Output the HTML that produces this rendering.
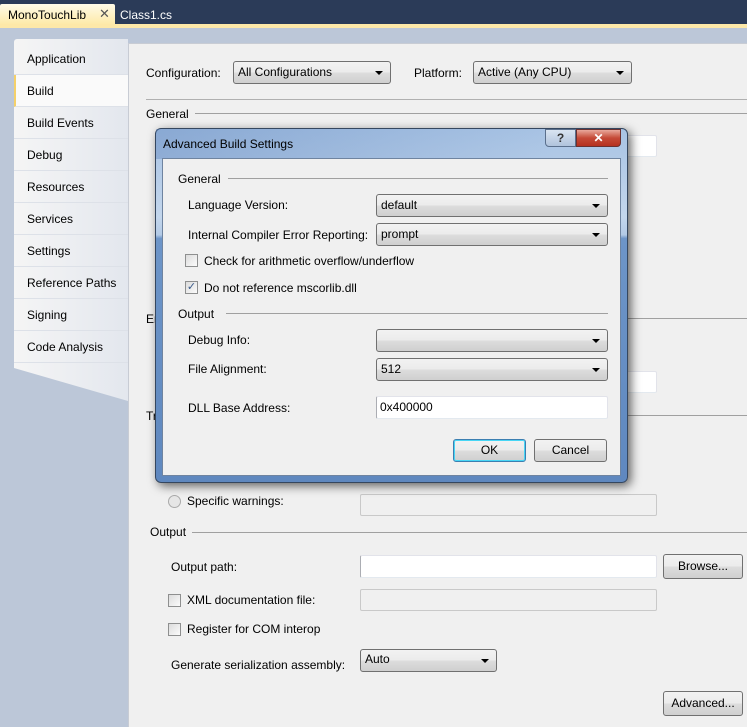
<!DOCTYPE html>
<html><head><style>
*{margin:0;padding:0;box-sizing:border-box}
body{width:747px;height:727px;overflow:hidden;background:#2b3b58;font-family:"Liberation Sans",sans-serif;font-size:12px;color:#000;position:relative}
.a{position:absolute}
.t{position:absolute;white-space:nowrap;line-height:14px}
.combo{position:absolute;border:1px solid #707070;border-radius:3px;background:linear-gradient(#f2f2f2 0%,#ebebeb 50%,#dddddd 51%,#cfcfcf 100%);padding:3px 4px;line-height:14px}
.combo:after{content:"";position:absolute;right:7px;top:50%;margin-top:-2px;border-left:4px solid transparent;border-right:4px solid transparent;border-top:4px solid #000}
.tb{position:absolute;background:#fff;border:1px solid #abadb3;border-radius:2px;border-color:#e2e3ea #e2e3ea #e3e9ef #abadb3}
.tb.dis{background:#f0f0f0;border:1px solid #c9c9c9}
.btn{position:absolute;border:1px solid #707070;border-radius:3px;background:linear-gradient(#f2f2f2 0%,#ebebeb 50%,#dddddd 51%,#cfcfcf 100%);text-align:center;line-height:20px}
.cb{position:absolute;width:13px;height:13px;border:1px solid #8e8f8f;background:linear-gradient(135deg,#dcdcdc,#fbfbfb)}
.line{position:absolute;height:1px;background:#a0a0a0}
.tab{position:absolute;left:14px;width:114px;height:32px;border-bottom:1px solid #dde1e8}
.tab span{position:absolute;left:13px;top:9px}
</style></head><body>
<div class="a" style="left:0;top:4px;width:115px;height:21px;background:linear-gradient(#fffbe8,#fde9a6);border-radius:2px 2px 0 0"></div>
<div class="t" style="left:8px;top:8px">MonoTouchLib</div>
<div class="t" style="left:99px;top:7px;color:#555;font-size:13px">✕</div>
<div class="t" style="left:120px;top:8px;color:#fff">Class1.cs</div>
<div class="a" style="left:0;top:24px;width:747px;height:4px;background:#fde8a8"></div>
<div class="a" style="left:0;top:28px;width:747px;height:699px;background:#bcc7d8"></div>
<div class="a" style="left:14px;top:39px;width:114px;height:362px;background:linear-gradient(90deg,#f5f5f5,#e3e7ee);clip-path:polygon(0 0,100% 0,100% 100%,0 329px);border-radius:3px 0 0 0"></div>
<div class="tab" style="top:43px"><span>Application</span></div>
<div class="tab" style="top:75px;background:#fafafa;border-left:2px solid #f4d06a"><span style="left:11px">Build</span></div>
<div class="tab" style="top:107px"><span>Build Events</span></div>
<div class="tab" style="top:139px"><span>Debug</span></div>
<div class="tab" style="top:171px"><span>Resources</span></div>
<div class="tab" style="top:203px"><span>Services</span></div>
<div class="tab" style="top:235px"><span>Settings</span></div>
<div class="tab" style="top:267px"><span>Reference Paths</span></div>
<div class="tab" style="top:299px"><span>Signing</span></div>
<div class="tab" style="top:331px"><span>Code Analysis</span></div>
<div class="a" style="left:128px;top:43px;width:619px;height:684px;background:#f0f0f0;border-left:1px solid #c8ccd4;border-top:1px solid #c8ccd4"></div>
<div class="t" style="left:146px;top:66px">Configuration:</div>
<div class="combo" style="left:233px;top:61px;width:158px;height:23px">All Configurations</div>
<div class="t" style="left:414px;top:66px">Platform:</div>
<div class="combo" style="left:473px;top:61px;width:159px;height:23px">Active (Any CPU)</div>
<div class="line" style="left:146px;top:99px;width:601px;background:#b0b0b0"></div>
<div class="t" style="left:146px;top:107px">General</div>
<div class="line" style="left:195px;top:113px;width:552px"></div>
<div class="tb" style="left:600px;top:135px;width:57px;height:22px"></div>
<div class="t" style="left:146px;top:312px">Er</div>
<div class="line" style="left:600px;top:318px;width:147px"></div>
<div class="tb" style="left:600px;top:371px;width:57px;height:22px"></div>
<div class="t" style="left:146px;top:409px">Tr</div>
<div class="line" style="left:600px;top:415px;width:147px"></div>
<div class="a" style="left:168px;top:495px;width:13px;height:13px;border-radius:50%;border:1px solid #aaa;background:#e6e6e6"></div>
<div class="t" style="left:187px;top:494px">Specific warnings:</div>
<div class="tb dis" style="left:360px;top:494px;width:297px;height:22px"></div>
<div class="t" style="left:150px;top:525px">Output</div>
<div class="line" style="left:192px;top:532px;width:555px"></div>
<div class="t" style="left:171px;top:560px">Output path:</div>
<div class="tb" style="left:360px;top:555px;width:297px;height:23px"></div>
<div class="btn" style="left:663px;top:554px;width:80px;height:25px;line-height:23px">Browse...</div>
<div class="cb" style="left:168px;top:594px"></div>
<div class="t" style="left:187px;top:593px">XML documentation file:</div>
<div class="tb dis" style="left:360px;top:589px;width:297px;height:22px"></div>
<div class="cb" style="left:168px;top:623px"></div>
<div class="t" style="left:187px;top:622px">Register for COM interop</div>
<div class="t" style="left:171px;top:658px">Generate serialization assembly:</div>
<div class="combo" style="left:360px;top:649px;width:137px;height:23px;padding-top:2px">Auto</div>
<div class="btn" style="left:663px;top:691px;width:80px;height:25px;line-height:23px">Advanced...</div>
<div class="a" style="left:155px;top:128px;width:473px;height:355px;border-radius:6px;border:1px solid #35475f;background:linear-gradient(#a8c3e4 0%,#c3d6ec 25%,#b3cae6 30%,#6d95c8 31%,#5f88bf 100%);box-shadow:3px 3px 10px rgba(0,0,0,.6)"></div>
<div class="a" style="left:156px;top:129px;width:400px;height:30px;background:linear-gradient(90deg,rgba(80,120,180,.35),rgba(255,255,255,0))"></div>
<div class="t" style="left:163px;top:137px">Advanced Build Settings</div>
<div class="a" style="left:545px;top:129px;width:31px;height:18px;border:1px solid #5a6f8c;border-radius:0 0 0 4px;background:linear-gradient(#d9e4f1,#b0c3dc);text-align:center;font-weight:bold;color:#333;line-height:16px">?</div>
<div class="a" style="left:576px;top:129px;width:45px;height:18px;border:1px solid #6a3030;border-radius:0 0 4px 0;background:linear-gradient(#e9a99c,#c54a37 50%,#b53020);text-align:center;color:#fff;font-weight:bold;line-height:16px">✕</div>
<div class="a" style="left:162px;top:158px;width:459px;height:318px;background:#f0f0f0;border:1px solid #6f84a0"></div>
<div class="t" style="left:178px;top:172px">General</div>
<div class="line" style="left:228px;top:178px;width:380px"></div>
<div class="t" style="left:188px;top:198px">Language Version:</div>
<div class="combo" style="left:376px;top:194px;width:232px;height:23px">default</div>
<div class="t" style="left:188px;top:228px">Internal Compiler Error Reporting:</div>
<div class="combo" style="left:376px;top:223px;width:232px;height:23px">prompt</div>
<div class="cb" style="left:185px;top:254px"></div>
<div class="t" style="left:204px;top:254px">Check for arithmetic overflow/underflow</div>
<div class="cb" style="left:185px;top:281px;font-size:11px;line-height:11px;text-align:center;color:#3a5a8a">✓</div>
<div class="t" style="left:204px;top:281px">Do not reference mscorlib.dll</div>
<div class="t" style="left:178px;top:307px">Output</div>
<div class="line" style="left:226px;top:313px;width:382px"></div>
<div class="t" style="left:188px;top:333px">Debug Info:</div>
<div class="combo" style="left:376px;top:329px;width:232px;height:23px"></div>
<div class="t" style="left:188px;top:362px">File Alignment:</div>
<div class="combo" style="left:376px;top:358px;width:232px;height:23px">512</div>
<div class="t" style="left:188px;top:401px">DLL Base Address:</div>
<div class="tb" style="left:376px;top:396px;width:232px;height:23px;padding:3px 3px;line-height:14px">0x400000</div>
<div class="btn" style="left:453px;top:439px;width:73px;height:23px;border-color:#3c7fb1;box-shadow:inset 0 0 0 1px #48d6f5">OK</div>
<div class="btn" style="left:534px;top:439px;width:73px;height:23px">Cancel</div>
</body></html>
